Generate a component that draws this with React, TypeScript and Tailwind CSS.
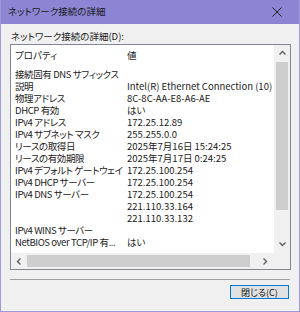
const font = { fontFamily: '"Noto Sans CJK JP", "Noto Sans", sans-serif' }

const rows: [string, string][] = [
  ['接続固有 DNS サフィックス', ''],
  ['説明', 'Intel(R) Ethernet Connection (10) I219-V'],
  ['物理アドレス', '8C-8C-AA-E8-A6-AE'],
  ['DHCP 有効', 'はい'],
  ['IPv4 アドレス', '172.25.12.89'],
  ['IPv4 サブネット マスク', '255.255.0.0'],
  ['リースの取得日', '2025年7月16日 15:24:25'],
  ['リースの有効期限', '2025年7月17日 0:24:25'],
  ['IPv4 デフォルト ゲートウェイ', '172.25.100.254'],
  ['IPv4 DHCP サーバー', '172.25.100.254'],
  ['IPv4 DNS サーバー', '172.25.100.254'],
  ['', '221.110.33.164'],
  ['', '221.110.33.132'],
  ['IPv4 WINS サーバー', ''],
  ['NetBIOS over TCP/IP 有...', 'はい'],
]

function Chevron({ dir }: { dir: 'up' | 'down' | 'left' | 'right' }) {
  const d = {
    up: 'M1.5 5.5 L4.5 2.5 L7.5 5.5',
    down: 'M1.5 2.5 L4.5 5.5 L7.5 2.5',
    left: 'M5.5 1.5 L2.5 4.5 L5.5 7.5',
    right: 'M2.5 1.5 L5.5 4.5 L2.5 7.5',
  }[dir]
  return (
    <svg width="9" height="9" viewBox="0 0 9 9" className="text-[#606060]">
      <path d={d} fill="none" stroke="currentColor" strokeWidth="1.4" />
    </svg>
  )
}

export default function App() {
  return (
    <div
      className="flex h-[312px] w-[300px] flex-col border-x border-b border-[#9f9ad9] bg-[#f0f0f0] text-[#1a1a1a] [font-feature-settings:'palt']"
      style={font}
    >
      {/* title bar */}
      <div className="flex h-[24px] shrink-0 items-center justify-between bg-[#8b85d4] pl-[7px] pr-[17px]">
        <span className="text-[9.5px] leading-none text-[#1a1a1a]">ネットワーク接続の詳細</span>
        <svg width="10" height="10" viewBox="0 0 10 10" className="text-[#222]">
          <path d="M0.5 0.5 L9.5 9.5 M9.5 0.5 L0.5 9.5" stroke="currentColor" strokeWidth="1" />
        </svg>
      </div>

      <div className="flex flex-1 flex-col px-[9px]">
        <div className="h-[20px] pt-[5px] pl-px text-[9.5px] leading-[14px]">ネットワーク接続の詳細(D):</div>

        {/* list box */}
        <div className="flex h-[226px] w-[281px] flex-col border border-[#828790] bg-white">
          <div className="flex h-[208px]">
            <div className="min-w-0 flex-1 overflow-hidden text-[9.5px] leading-[12px]">
              <div className="flex h-[20px] items-center pl-[4px]">
                <span className="w-[112px]">プロパティ</span>
                <span>値</span>
              </div>
              <div className="mt-[3px]">
                {rows.map(([k, v], i) => (
                  <div key={i} className="flex h-[12px] items-center overflow-hidden pl-[4px] whitespace-nowrap">
                    <span className="w-[112px] shrink-0 overflow-hidden pr-[2px] tracking-[-0.4px]">{k}</span>
                    <span>{v}</span>
                  </div>
                ))}
              </div>
            </div>
            {/* vertical scrollbar */}
            <div className="flex w-[16px] shrink-0 flex-col bg-[#f0f0f0]">
              <div className="flex h-[17px] items-center justify-center">
                <Chevron dir="up" />
              </div>
              <div className="mx-[2px] h-[148px] bg-[#cdcdcd]" />
              <div className="flex-1" />
              <div className="flex h-[17px] items-center justify-center">
                <Chevron dir="down" />
              </div>
            </div>
          </div>
          {/* horizontal scrollbar */}
          <div className="flex h-[16px] bg-[#f0f0f0]">
            <div className="flex w-[16px] items-center justify-center">
              <Chevron dir="left" />
            </div>
            <div className="my-[2px] w-[223px] bg-[#cdcdcd]" />
            <div className="flex-1" />
            <div className="flex w-[17px] items-center justify-center">
              <Chevron dir="right" />
            </div>
            <div className="w-[16px] bg-[#f0f0f0]" />
          </div>
        </div>

        <div className="mt-[9px] h-px w-[280px] bg-[#a0a0a0]" />

        <div className="mt-[5px] flex justify-end pr-[1px]">
          <button className="flex h-[14px] w-[59px] items-center justify-center border border-[#0078d7] bg-[#e1e1e1] text-[9px] leading-none text-[#111]">
            閉じる(C)
          </button>
        </div>
      </div>
    </div>
  )
}
